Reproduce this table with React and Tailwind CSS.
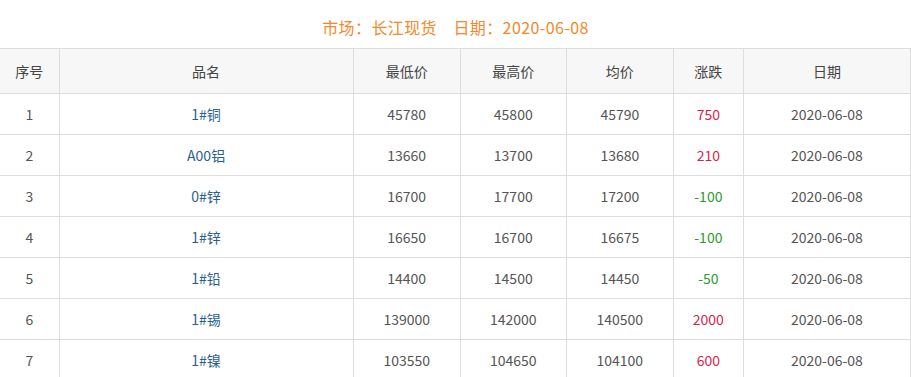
const rows = [
  ["1", "1#铜", "45780", "45800", "45790", "750"],
  ["2", "A00铝", "13660", "13700", "13680", "210"],
  ["3", "0#锌", "16700", "17700", "17200", "-100"],
  ["4", "1#锌", "16650", "16700", "16675", "-100"],
  ["5", "1#铅", "14400", "14500", "14450", "-50"],
  ["6", "1#锡", "139000", "142000", "140500", "2000"],
  ["7", "1#镍", "103550", "104650", "104100", "600"],
];

const cols = ["w-[59px]", "w-[294px]", "w-[107px]", "w-[106px]", "w-[107px]", "w-[70px]", "w-[167px]"];
const heads = ["序号", "品名", "最低价", "最高价", "均价", "涨跌", "日期"];

export default function App() {
  return (
    <div className="w-[911px] bg-white font-['Microsoft_YaHei','Noto_Sans_CJK_SC',sans-serif] text-[#555] text-[14px]">
      <div className="h-[48px] pt-[15px] text-center text-[16px] leading-[24px] tracking-[0.4px] text-[#f08a2c]">
        市场：长江现货　日期：2020-06-08
      </div>
      <table className="w-[911px] table-fixed border-collapse">
        <colgroup>
          {cols.map((c, i) => (
            <col key={i} className={c} />
          ))}
        </colgroup>
        <thead>
          <tr className="h-[45px] bg-[#f7f7f7]">
            {heads.map((h, i) => (
              <th
                key={h}
                className={
                  "border border-[#ddd] font-normal text-[#444] text-center " +
                  (i === 0 ? "border-l-0" : "")
                }
              >
                {h}
              </th>
            ))}
          </tr>
        </thead>
        <tbody>
          {rows.map((r) => {
            const up = !r[5].startsWith("-");
            return (
              <tr key={r[0]} className="h-[41px]">
                <td className="border border-l-0 border-[#ddd] text-center">{r[0]}</td>
                <td className="border border-[#ddd] text-center text-[#2b5f8f]">{r[1]}</td>
                <td className="border border-[#ddd] text-center">{r[2]}</td>
                <td className="border border-[#ddd] text-center">{r[3]}</td>
                <td className="border border-[#ddd] text-center">{r[4]}</td>
                <td className={"border border-[#ddd] text-center " + (up ? "text-[#dc1e4a]" : "text-[#2e9a2e]")}>
                  {r[5]}
                </td>
                <td className="border border-[#ddd] text-center">2020-06-08</td>
              </tr>
            );
          })}
        </tbody>
      </table>
    </div>
  );
}
